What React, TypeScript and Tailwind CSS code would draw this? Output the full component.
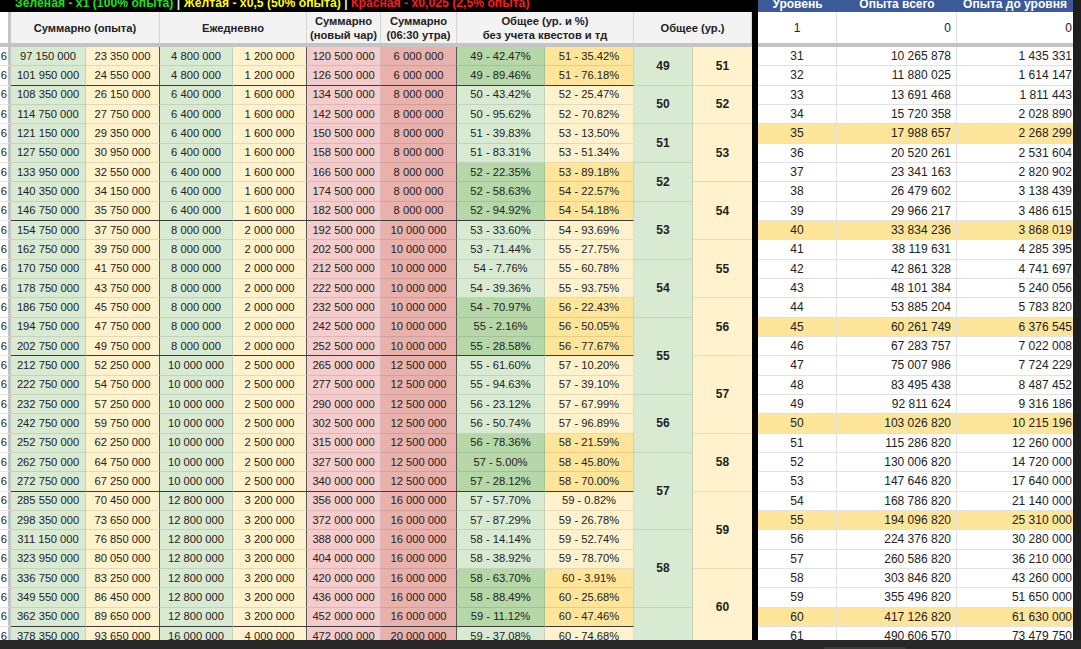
const rows: string[][] = [
  ['97 150 000', '23 350 000', '4 800 000', '1 200 000', '120 500 000', '6 000 000', '49 - 42.47%', '51 - 35.42%'],
  ['101 950 000', '24 550 000', '4 800 000', '1 200 000', '126 500 000', '6 000 000', '49 - 89.46%', '51 - 76.18%'],
  ['108 350 000', '26 150 000', '6 400 000', '1 600 000', '134 500 000', '8 000 000', '50 - 43.42%', '52 - 25.47%'],
  ['114 750 000', '27 750 000', '6 400 000', '1 600 000', '142 500 000', '8 000 000', '50 - 95.62%', '52 - 70.82%'],
  ['121 150 000', '29 350 000', '6 400 000', '1 600 000', '150 500 000', '8 000 000', '51 - 39.83%', '53 - 13.50%'],
  ['127 550 000', '30 950 000', '6 400 000', '1 600 000', '158 500 000', '8 000 000', '51 - 83.31%', '53 - 51.34%'],
  ['133 950 000', '32 550 000', '6 400 000', '1 600 000', '166 500 000', '8 000 000', '52 - 22.35%', '53 - 89.18%'],
  ['140 350 000', '34 150 000', '6 400 000', '1 600 000', '174 500 000', '8 000 000', '52 - 58.63%', '54 - 22.57%'],
  ['146 750 000', '35 750 000', '6 400 000', '1 600 000', '182 500 000', '8 000 000', '52 - 94.92%', '54 - 54.18%'],
  ['154 750 000', '37 750 000', '8 000 000', '2 000 000', '192 500 000', '10 000 000', '53 - 33.60%', '54 - 93.69%'],
  ['162 750 000', '39 750 000', '8 000 000', '2 000 000', '202 500 000', '10 000 000', '53 - 71.44%', '55 - 27.75%'],
  ['170 750 000', '41 750 000', '8 000 000', '2 000 000', '212 500 000', '10 000 000', '54 - 7.76%', '55 - 60.78%'],
  ['178 750 000', '43 750 000', '8 000 000', '2 000 000', '222 500 000', '10 000 000', '54 - 39.36%', '55 - 93.75%'],
  ['186 750 000', '45 750 000', '8 000 000', '2 000 000', '232 500 000', '10 000 000', '54 - 70.97%', '56 - 22.43%'],
  ['194 750 000', '47 750 000', '8 000 000', '2 000 000', '242 500 000', '10 000 000', '55 - 2.16%', '56 - 50.05%'],
  ['202 750 000', '49 750 000', '8 000 000', '2 000 000', '252 500 000', '10 000 000', '55 - 28.58%', '56 - 77.67%'],
  ['212 750 000', '52 250 000', '10 000 000', '2 500 000', '265 000 000', '12 500 000', '55 - 61.60%', '57 - 10.20%'],
  ['222 750 000', '54 750 000', '10 000 000', '2 500 000', '277 500 000', '12 500 000', '55 - 94.63%', '57 - 39.10%'],
  ['232 750 000', '57 250 000', '10 000 000', '2 500 000', '290 000 000', '12 500 000', '56 - 23.12%', '57 - 67.99%'],
  ['242 750 000', '59 750 000', '10 000 000', '2 500 000', '302 500 000', '12 500 000', '56 - 50.74%', '57 - 96.89%'],
  ['252 750 000', '62 250 000', '10 000 000', '2 500 000', '315 000 000', '12 500 000', '56 - 78.36%', '58 - 21.59%'],
  ['262 750 000', '64 750 000', '10 000 000', '2 500 000', '327 500 000', '12 500 000', '57 - 5.00%', '58 - 45.80%'],
  ['272 750 000', '67 250 000', '10 000 000', '2 500 000', '340 000 000', '12 500 000', '57 - 28.12%', '58 - 70.00%'],
  ['285 550 000', '70 450 000', '12 800 000', '3 200 000', '356 000 000', '16 000 000', '57 - 57.70%', '59 - 0.82%'],
  ['298 350 000', '73 650 000', '12 800 000', '3 200 000', '372 000 000', '16 000 000', '57 - 87.29%', '59 - 26.78%'],
  ['311 150 000', '76 850 000', '12 800 000', '3 200 000', '388 000 000', '16 000 000', '58 - 14.14%', '59 - 52.74%'],
  ['323 950 000', '80 050 000', '12 800 000', '3 200 000', '404 000 000', '16 000 000', '58 - 38.92%', '59 - 78.70%'],
  ['336 750 000', '83 250 000', '12 800 000', '3 200 000', '420 000 000', '16 000 000', '58 - 63.70%', '60 - 3.91%'],
  ['349 550 000', '86 450 000', '12 800 000', '3 200 000', '436 000 000', '16 000 000', '58 - 88.49%', '60 - 25.68%'],
  ['362 350 000', '89 650 000', '12 800 000', '3 200 000', '452 000 000', '16 000 000', '59 - 11.12%', '60 - 47.46%'],
  ['378 350 000', '93 650 000', '16 000 000', '4 000 000', '472 000 000', '20 000 000', '59 - 37.08%', '60 - 74.68%'],
];

// rows whose % cells are the darker shade, and rows closing a block (dark line under)
const darkPct = [1, 2, 7, 8, 9, 14, 15, 16, 21, 22, 23, 28, 29, 30];
const blockEnd = [2, 9, 16, 23, 30];

const lvlGreen: [string, number][] = [
  ['49', 2], ['50', 2], ['51', 2], ['52', 2], ['53', 3], ['54', 3], ['55', 4], ['56', 3], ['57', 4], ['58', 4], ['', 4],
];
const lvlYellow: [string, number][] = [
  ['51', 2], ['52', 2], ['53', 3], ['54', 3], ['55', 3], ['56', 3], ['57', 4], ['58', 3], ['59', 4], ['60', 4],
];
const spanH: Record<number, string> = { 2: 'h-[38.67px]', 3: 'h-[58px]', 4: 'h-[77.33px]' };

const levels: [string, string, string][] = [
  ['31', '10 265 878', '1 435 331'],
  ['32', '11 880 025', '1 614 147'],
  ['33', '13 691 468', '1 811 443'],
  ['34', '15 720 358', '2 028 890'],
  ['35', '17 988 657', '2 268 299'],
  ['36', '20 520 261', '2 531 604'],
  ['37', '23 341 163', '2 820 902'],
  ['38', '26 479 602', '3 138 439'],
  ['39', '29 966 217', '3 486 615'],
  ['40', '33 834 236', '3 868 019'],
  ['41', '38 119 631', '4 285 395'],
  ['42', '42 861 328', '4 741 697'],
  ['43', '48 101 384', '5 240 056'],
  ['44', '53 885 204', '5 783 820'],
  ['45', '60 261 749', '6 376 545'],
  ['46', '67 283 757', '7 022 008'],
  ['47', '75 007 986', '7 724 229'],
  ['48', '83 495 438', '8 487 452'],
  ['49', '92 811 624', '9 316 186'],
  ['50', '103 026 820', '10 215 196'],
  ['51', '115 286 820', '12 260 000'],
  ['52', '130 006 820', '14 720 000'],
  ['53', '147 646 820', '17 640 000'],
  ['54', '168 786 820', '21 140 000'],
  ['55', '194 096 820', '25 310 000'],
  ['56', '224 376 820', '30 280 000'],
  ['57', '260 586 820', '36 210 000'],
  ['58', '303 846 820', '43 260 000'],
  ['59', '355 496 820', '51 650 000'],
  ['60', '417 126 820', '61 630 000'],
  ['61', '490 606 570', '73 479 750'],
];

const cell = 'flex items-center justify-center border-b border-r border-black/10 whitespace-nowrap overflow-hidden';

function DataRow({ r, i }: { r: string[]; i: number }) {
  const n = i + 1;
  const dark = darkPct.includes(n);
  const end = blockEnd.includes(n) ? 'border-b-[#3c3c3c]' : '';
  return (
    <div className="flex h-[19.33px] shrink-0">
      <div className="w-[11px] flex items-center justify-end pr-[1px] bg-white border-b border-black/10 border-r-[3px] border-r-[#c4c4c4] text-[#222]">
        6
      </div>
      <div className={`${cell} ${end} w-[75px] bg-[#d9ead3]`}>{r[0]}</div>
      <div className={`${cell} ${end} w-[74px] bg-[#fff2cc] border-r-[#555]`}>{r[1]}</div>
      <div className={`${cell} ${end} w-[73px] bg-[#d9ead3]`}>{r[2]}</div>
      <div className={`${cell} ${end} w-[74px] bg-[#fff2cc] border-r-[#555]`}>{r[3]}</div>
      <div className={`${cell} ${end} w-[74px] bg-[#f4cccc]`}>{r[4]}</div>
      <div className={`${cell} ${end} w-[76px] bg-[#e8b1ab] border-r-[#555]`}>{r[5]}</div>
      <div className={`${cell} ${end} w-[88px] ${dark ? 'bg-[#b6d7a8]' : 'bg-[#d9ead3]'}`}>{r[6]}</div>
      <div className={`${cell} ${end} w-[89px] ${dark ? 'bg-[#ffe599]' : 'bg-[#fff2cc]'}`}>{r[7]}</div>
    </div>
  );
}

function HeadCell({ w, children }: { w: string; children: React.ReactNode }) {
  return (
    <div className={`${w} flex items-center justify-center text-center border-r border-[#d4d4d4] font-bold leading-[14px]`}>
      {children}
    </div>
  );
}

export default function App() {
  return (
    <div className="w-[1081px] h-[649px] overflow-hidden flex flex-col bg-[#262626] font-['Liberation_Sans',Arial,sans-serif] text-[#222]">
      <div className="flex flex-1 min-h-0">
        {/* Left sheet */}
        <div className="w-[752px] flex flex-col bg-white overflow-hidden text-[11.2px]">
          <div className="h-[12px] shrink-0 bg-black overflow-hidden pl-[15px]">
            <div className="-mt-[3px] leading-[12px] whitespace-nowrap font-bold text-[12.2px]">
              <span className="text-[#1fe01f]">Зеленая - x1 (100% опыта)</span>
              <span className="text-[#e8e8e8]"> | </span>
              <span className="text-[#ffff00]">Желтая - x0,5 (50% опыта)</span>
              <span className="text-[#e8e8e8]"> | </span>
              <span className="text-[#ff1a1a]">Красная - x0,025 (2,5% опыта)</span>
            </div>
          </div>
          <div className="h-[31px] shrink-0 flex bg-[#f3f3f3]">
            <div className="w-[11px] bg-white border-r-[3px] border-[#c4c4c4]" />
            <HeadCell w="w-[149px]">Суммарно (опыта)</HeadCell>
            <HeadCell w="w-[147px]">Ежедневно</HeadCell>
            <HeadCell w="w-[74px]">
              Суммарно
              <br />
              (новый чар)
            </HeadCell>
            <HeadCell w="w-[76px]">
              Суммарно
              <br />
              (06:30 утра)
            </HeadCell>
            <HeadCell w="w-[177px]">
              Общее (ур. и %)
              <br />
              без учета квестов и тд
            </HeadCell>
            <HeadCell w="w-[118px]">Общее (ур.)</HeadCell>
          </div>
          <div className="h-[4px] shrink-0 bg-[#c4c4c4]" />
          <div className="flex">
            <div className="flex flex-col w-[634px]">
              {rows.map((r, i) => (
                <DataRow key={i} r={r} i={i} />
              ))}
            </div>
            <div className="flex flex-col w-[59px]">
              {lvlGreen.map(([v, s], i) => (
                <div
                  key={i}
                  className={`${spanH[s]} shrink-0 flex items-center justify-center font-bold text-[12px] bg-[#d9ead3] border-b border-r border-black/10`}
                >
                  {v}
                </div>
              ))}
            </div>
            <div className="flex flex-col w-[59px]">
              {lvlYellow.map(([v, s], i) => (
                <div
                  key={i}
                  className={`${spanH[s]} shrink-0 flex items-center justify-center font-bold text-[12px] bg-[#fff2cc] border-b border-black/10`}
                >
                  {v}
                </div>
              ))}
            </div>
          </div>
        </div>

        <div className="w-[6px] bg-black" />

        {/* Right sheet */}
        <div className="w-[315px] flex flex-col bg-white overflow-hidden text-[12px]">
          <div className="h-[12px] shrink-0 flex bg-[#3c5a99] text-white font-bold overflow-hidden">
            <div className="w-[79px] text-center -mt-[2px] leading-[12px]">Уровень</div>
            <div className="w-[120px] text-center -mt-[2px] leading-[12px]">Опыта всего</div>
            <div className="w-[116px] text-center -mt-[2px] leading-[12px]">Опыта до уровня</div>
          </div>
          <div className="h-[31px] shrink-0 flex">
            <div className="w-[79px] flex items-center justify-center border-r border-[#e2e2e2]">1</div>
            <div className="w-[120px] flex items-center justify-end pr-[5px] border-r border-[#e2e2e2]">0</div>
            <div className="w-[116px] flex items-center justify-end pr-[1px]">0</div>
          </div>
          <div className="h-[4px] shrink-0 bg-[#c4c4c4]" />
          {levels.map(([a, b, c]) => {
            const hl = Number(a) % 5 === 0;
            return (
              <div key={a} className={`h-[19.33px] shrink-0 flex ${hl ? 'bg-[#ffe599]' : 'bg-white'}`}>
                <div className="w-[79px] flex items-center justify-center border-r border-b border-[#e2e2e2]">{a}</div>
                <div className="w-[120px] flex items-center justify-end pr-[5px] border-r border-b border-[#e2e2e2]">{b}</div>
                <div className="w-[116px] flex items-center justify-end pr-[1px] border-b border-[#e2e2e2]">{c}</div>
              </div>
            );
          })}
        </div>

        <div className="flex-1 bg-[#1e1e1e]" />
      </div>

      {/* bottom bar */}
      <div className="h-[9px] shrink-0 flex items-end bg-[#282828]">
        <div className="ml-[824px] w-[82px] h-[2px] bg-[#3a3a3a]" />
      </div>
    </div>
  );
}
